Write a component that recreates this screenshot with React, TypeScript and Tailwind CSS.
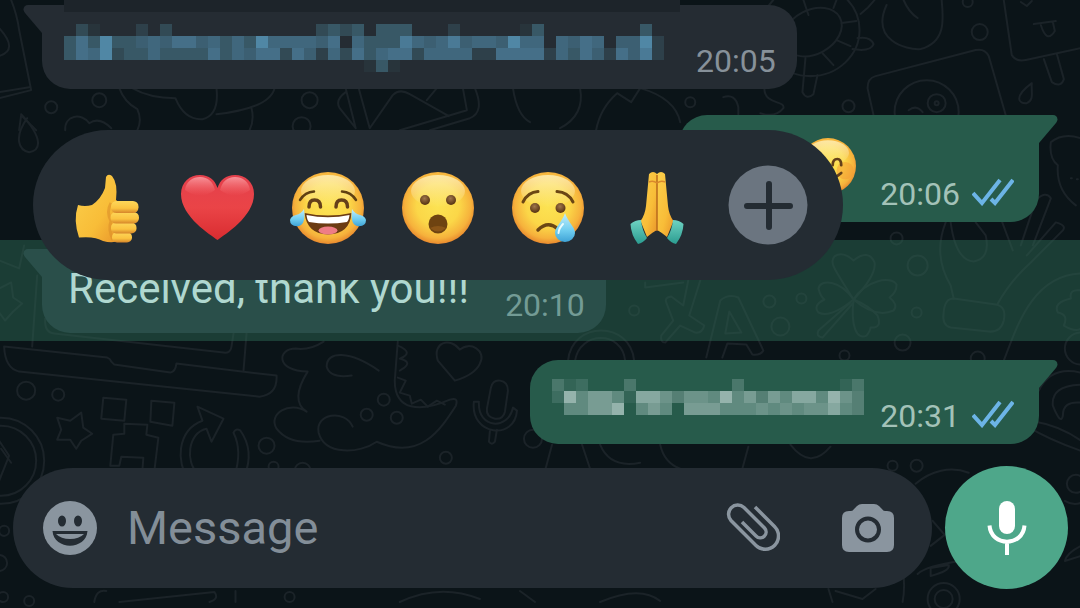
import type { ReactNode } from "react";

const EMAIL_ROWS = [
  ".31...2.3............3434.444...2.....14........4.",
  "47494456577564649666657064448656856659660657605592",
  "47693446444474657737526374677366662277772647527582",
  ".........................141......................",
];

const REPLY_ROWS = [
  "312...3........3........13",
  "29577518864665957475885964",
  ".55779.575.777555656566854",
];

const DOODLES = [
  // laptop
  "M5 346L108 357Q111 358 112 361L115 364L171 372Q176 371 177 363L277 375Q278 394 260 396L20 371Q6 368 5 346Z",
  "M33 346L38 275M46 318Q45 332 55 333L224 352Q231 353 232 346L234 333M244 370L247 333",
  // star and blocks
  "M82 412L84 427L93 433L82 440L77 448L71 439L58 439L62 429L58 417L71 420Z",
  "M104 397L127 399L125 420L102 418ZM152 400L175 402L173 425L151 421Z",
  "M155 470L159 437L147 434L148 424L125 423L125 433L114 434L111 465L120 465L122 456L144 457L143 470",
  // circular arrow
  "M203 420L198 406L224 418L212 441L207 428C188 432 186 462 198 472M203 420C176 430 178 465 188 475",
  "M234 432Q236 427 241 430Q255 450 245 475M234 432Q243 450 235 475",
  // cloud and crescent
  "M324 341Q310 350 296 348C278 348 275 370 308 371Q290 400 307 411C290 400 268 413 277 428Q290 445 320 440",
  "M353 426C345 408 315 413 319 432C325 455 360 453 377 441C420 460 440 430 456 405Q459 396 450 399C420 412 395 410 395 380L398 341",
  "M398 345Q415 352 400 358Q415 362 400 370M398 377L406 380L400 392L410 395L412 403L421 399L428 406L437 400L445 404",
  "M379 370C350 350 327 350 327 366Q330 378 352 375",
  "M455 380L438 360C432 342 450 336 460 349C470 340 487 350 480 363Q475 374 455 380Z",
  // microphone
  "M491 387Q493 379 500 380Q508 381 508 390L505 411Q503 419 495 418Q486 416 487 408Z",
  "M474 401C470 435 515 440 517 410M479 402C478 428 508 430 513 407M490 430L489 441Q492 445 495 441L497 429M474 401H479M513 407L517 410",
  // top left sheet
  "M12 0Q18 15 20 30L32 90L0 98M0 92L30 87M0 28Q20 50 0 56",
  "M20 130L22 115L37 130M66 130C65 115 82 112 90 123Q100 116 112 128M120 88Q125 102 138 109Q143 120 138 130",
  "M28 118C14 138 20 150 30 152C42 150 44 138 22 114M133 88Q150 98 176 98Q185 120 203 119Q220 115 217 88M217 114Q270 108 275 88M252 108Q255 120 250 130",
  // picture
  "M346 88L356 128M359 88L370 128L393 95Q400 88 410 94L449 116M427 100L437 88M463 88L467 110L400 130M475 88Q485 112 470 118L430 130M513 88Q517 115 530 122M346 92Q335 100 340 108L356 128",
  "M580 88Q585 115 560 128M596 130Q600 108 617 93L631 102L640 88Q675 98 680 122",
  "M723 97Q735 93 738 107L738 114M764 88C764 105 785 100 783 108Q775 118 760 113",
  // turtle
  "M841 23L856 21M836 40L850 46M822 53L833 65M833 8L836 0M808 15L803 0",
  "M857 38Q870 36 873 44Q870 52 852 49M805 58L802 92Q806 100 813 94L817 75M860 14Q868 8 874 0",
  "M886 5C870 40 905 50 920 49C945 42 943 20 941 0M903 0Q908 12 917 18",
  // ice lolly
  "M1003 0L1011 55Q1015 62 1025 60L1080 48M1043 59L1051 82Q1060 88 1063 79L1056 54M1033 24L1055 21M1040 25Q1046 44 1054 31L1052 22M1020 2L1026 6L1031 1",
  // camera
  "M873 115L867 88Q867 78 875 76L975 50Q984 48 988 56L1005 115M908 110Q916 104 922 112",
  "M1031 83C1012 97 1018 104 1026 103C1034 100 1030 90 1031 83Z",
  // bear and hand
  "M1080 138Q1062 132 1050 142Q1048 158 1057 165Q1055 190 1075 205M1070 178h1M1076 179h1",
  "M945 222Q932 255 950 285L953 298M950 222Q955 260 973 261Q990 258 985 235L975 222M1000 218L1012 250M1020 245L1035 200Q1045 190 1050 198L1032 245",
  "M1026 255L1055 222Q1066 225 1062 230L1030 262Q1010 280 997 303",
  "M953 298L995 304Q1006 306 1003 320Q1000 332 988 331L950 327Q941 325 943 312Q944 298 953 298Z",
  // clover
  "M853 299C835 270 828 262 834 256Q842 250 853 260Q868 248 874 262Q876 275 853 299Z",
  "M853 299C840 280 820 278 818 288Q820 296 824 299Q812 305 818 312Q830 318 853 299C865 280 890 275 896 284Q896 292 889 297Q898 304 893 310Q875 318 853 299",
  "M853 299C850 325 856 340 866 335Q870 330 870 327Q882 328 877 315Q868 305 853 299ZM850 302L818 330Q815 336 822 337L853 302",
  // letters
  "M688 280L683 305L671 296Q664 297 666 302L673 320L661 335Q660 342 665 342L680 325L695 332Q702 333 704 325L689 315L700 280M645 282V287L683 282",
  "M706 357L720 300Q728 293 738 297L763 350Q760 355 752 354L746 344L727 343L722 357M729 311L741 332L725 333Z",
  "M568 360C572 320 630 320 634 360M575 360C580 330 622 330 625 360",
  // cap
  "M1003 360C1015 330 1030 275 1080 273M1080 290Q1068 288 1070 298Q1052 302 1057 312Q1068 314 1063 325Q1075 332 1080 328",
  "M1080 372Q1050 365 1038 390M1080 384Q1050 385 1052 405Q1060 425 1062 415Q1062 400 1080 402M1025 425Q1050 440 1080 450M1030 420Q1060 425 1080 440",
  "M12 282L14 297L23 303L14 311L6 320L0 312M0 288L12 282M0 260L20 268L25 245",
  "M545 470L552 444M582 444L590 468M600 444Q610 468 640 462M660 444Q664 462 680 468M742 468L748 446M790 444Q810 470 830 446",
  // below the composer
  "M95 601Q97 588 107 590M120 601L215 591Q220 598 210 601M236 590V601M400 601Q440 582 480 598M520 590L535 601M600 601Q640 584 660 600",
  "M828 588L832 601M835 590L862 598L875 588M915 483C930 470 950 465 968 472M932 520L944 534L930 545M917 573Q925 565 960 560M930 567L948 564Q950 570 930 575ZM902 567Q905 585 902 601",
  "M1080 545Q1066 552 1064 560L1080 555M1064 500Q1072 505 1080 502M0 440L10 455L0 480M2 448L12 462",
];

// x, y, radius
const RINGS = [
  [27, 390, 9], [59, 394, 6], [384, 399, 6], [367, 414, 6], [397, 417, 6], [267, 445, 8], [274, 466, 5],
  [303, 470, 8], [446, 457, 6], [533, 438, 9], [2, 460, 43], [2, 460, 35], [52, 107, 6], [100, 100, 7],
  [310, 100, 8], [302, 126, 9], [967, 2, 5], [979, 32, 8], [690, 102, 5], [848, 106, 6], [926, 112, 32],
  [936, 103, 9], [936, 103, 2], [896, 238, 6], [917, 265, 10], [769, 301, 6], [801, 298, 5], [780, 326, 9],
  [634, 310, 5], [916, 312, 5], [902, 342, 8], [844, 355, 5], [977, 358, 7], [1080, 348, 16], [5, 530, 5],
  [0, 562, 8], [4, 596, 5], [30, 600, 5], [290, 596, 5], [892, 465, 5], [916, 465, 6], [943, 598, 9],
  [943, 598, 16], [1075, 483, 9],
];

function Wallpaper() {
  return (
    <svg
      className="absolute inset-0 h-full w-full"
      viewBox="0 0 1080 608"
      preserveAspectRatio="xMidYMid slice"
      fill="none"
      stroke="#1b2328"
      strokeWidth="2"
      strokeLinejoin="round"
      strokeLinecap="round"
      aria-hidden="true"
    >
      {DOODLES.map((d, i) => (
        <path key={i} d={d} />
      ))}
      {RINGS.map(([x, y, r], i) => (
        <circle key={i} cx={x} cy={y} r={r} />
      ))}
      <ellipse cx="812" cy="32" rx="31" ry="22" transform="rotate(-28 812 32)" />
      <ellipse cx="810" cy="30" rx="49" ry="46" />
    </svg>
  );
}

const BLUE_SHADES = ["#242c33", "#28343b", "#2e404a", "#324a55", "#385866", "#3c5f72", "#40677d", "#456f88", "#4a7a96", "#5087a5"];
const GREEN_SHADES = ["#275b4b", "#336456", "#3d6d60", "#4a776b", "#557f74", "#608a7f", "#6c9389", "#789c93", "#86a8a0", "#95b3ac"];

function Mosaic({ rows, shades }: { rows: string[]; shades: string[] }) {
  const w = rows[0].length * 12;
  const h = rows.length * 12;
  return (
    <svg width={w} height={h} viewBox={`0 0 ${w} ${h}`} shapeRendering="crispEdges" className="block shrink-0" aria-hidden="true">
      {rows.map((row, y) =>
        row.split("").map((c, x) =>
          c === "." || c === "0" ? null : (
            <rect key={`${x}-${y}`} x={x * 12} y={y * 12} width="12" height="12" fill={shades[Number(c)]} />
          )
        )
      )}
    </svg>
  );
}

function Tail({ side }: { side: "left" | "right" }) {
  return (
    <svg
      width="20"
      height="28"
      viewBox="0 0 20 28"
      fill="currentColor"
      className={side === "left" ? "absolute right-full top-0 -scale-x-100" : "absolute left-full top-0"}
      aria-hidden="true"
    >
      <path d="M-1 0H14C18 0 20 4 17 8L0 28H-1Z" />
    </svg>
  );
}

function Incoming({ time, tone, timeTone, children }: { time: string; tone: string; timeTone: string; children: ReactNode }) {
  return (
    <div className={`relative ml-[42px] flex w-fit items-end gap-8 rounded-[28px] rounded-tl-none pb-3 pl-[22px] pr-[21px] pt-4 ${tone}`}>
      <Tail side="left" />
      {children}
      <time className={`relative text-[32px] leading-8 ${timeTone}`}>{time}</time>
    </div>
  );
}

function Outgoing({ time, size, children }: { time: string; size?: string; children: ReactNode }) {
  return (
    <div
      className={`relative ml-auto mr-[41px] flex w-fit items-end justify-end rounded-[28px] rounded-tr-none bg-[#275b4b] pb-3 pl-[22px] pr-[25px] text-[#275b4b] ${size ?? ""}`}
    >
      <Tail side="right" />
      {children}
      <time className="ml-4 text-[32px] leading-8 text-[#a3c2b8]">{time}</time>
      <svg width="42" height="28" viewBox="0 0 42 28" fill="none" stroke="#6cb4e6" strokeWidth="4" className="mb-1 ml-3" role="img" aria-label="Read">
        <path d="M1 15L10 25L28 2M19 21L23 25L41 2" />
      </svg>
    </div>
  );
}

function EmojiDefs() {
  return (
    <svg width="0" height="0" className="absolute" aria-hidden="true">
      <defs>
        <radialGradient id="face" cx="50%" cy="46%" r="54%">
          <stop offset="0" stopColor="#fce353" />
          <stop offset=".55" stopColor="#fbd748" />
          <stop offset=".85" stopColor="#f6b23c" />
          <stop offset="1" stopColor="#e8892e" />
        </radialGradient>
        <linearGradient id="shine" x1="0" y1="0" x2="0" y2="1">
          <stop offset="0" stopColor="#fff6c8" stopOpacity=".75" />
          <stop offset="1" stopColor="#fff6c8" stopOpacity="0" />
        </linearGradient>
        <linearGradient id="skin" x1="0" y1="0" x2="1" y2="1">
          <stop offset="0" stopColor="#fcd04c" />
          <stop offset=".6" stopColor="#f8bd38" />
          <stop offset="1" stopColor="#e8932a" />
        </linearGradient>
        <linearGradient id="finger" x1="0" y1="0" x2="0" y2="1">
          <stop offset="0" stopColor="#fdd75a" />
          <stop offset=".6" stopColor="#fbc340" />
          <stop offset="1" stopColor="#d5852a" />
        </linearGradient>
        <linearGradient id="heart" x1="0" y1="0" x2="0" y2="1">
          <stop offset="0" stopColor="#e4404c" />
          <stop offset=".5" stopColor="#ea4447" />
          <stop offset="1" stopColor="#d92c30" />
        </linearGradient>
        <linearGradient id="gloss" x1="0" y1="0" x2="0" y2="1">
          <stop offset="0" stopColor="#ffb5ba" stopOpacity=".7" />
          <stop offset="1" stopColor="#ff8080" stopOpacity="0" />
        </linearGradient>
        <linearGradient id="tear" x1="0" y1="0" x2="0" y2="1">
          <stop offset="0" stopColor="#c5eefb" />
          <stop offset=".6" stopColor="#6fcdf0" />
          <stop offset="1" stopColor="#3fa3d6" />
        </linearGradient>
        <linearGradient id="cuff" x1="0" y1="0" x2="0" y2="1">
          <stop offset="0" stopColor="#6fd3c3" />
          <stop offset="1" stopColor="#2b9c90" />
        </linearGradient>
        <radialGradient id="eye" cx="45%" cy="35%" r="60%">
          <stop offset="0" stopColor="#a0764c" />
          <stop offset="1" stopColor="#5a3614" />
        </radialGradient>
      </defs>
    </svg>
  );
}

function Face() {
  return (
    <>
      <circle cx="36" cy="36" r="36" fill="url(#face)" />
      <ellipse cx="36" cy="19" rx="27" ry="16" fill="url(#shine)" />
    </>
  );
}

function ThumbsUp() {
  return (
    <g transform="translate(3 2)">
      <path d="M3 31Q10 33 17 31Q26 25 30 14L31 3Q33 -1 37 2Q43 9 41 26L46 30V66Q38 70 28 67Q20 62 4 63.500Q-2 46 3 31Z" fill="url(#skin)" />
      <path d="M36 29Q31 38 36 47Q33 55 38 66" fill="none" stroke="#dc8f2a" strokeWidth="3" opacity=".6" />
      <rect x="37" y="58" width="20" height="10.500" rx="5" fill="url(#finger)" />
      <rect x="36" y="48.500" width="25.500" height="11" rx="5" fill="url(#finger)" />
      <rect x="35.500" y="38" width="28.500" height="11.500" rx="5.500" fill="url(#finger)" />
      <rect x="36" y="27" width="27.500" height="12" rx="5.500" fill="url(#finger)" />
    </g>
  );
}

function RedHeart() {
  return (
    <g transform="translate(-1 3)">
      <path d="M36.500 65C30 60 0 42 0 19C0 7 9 0 19 0C28 0 34 5 36.500 13C39 5 45 0 54 0C64 0 73 7 73 19C73 42 43 60 36.500 65Z" fill="url(#heart)" />
      <path d="M4 15C5 6 12 2 19 2C27 2 32 7 34 15Q19 26 4 15ZM39 15C41 7 46 2 54 2C61 2 68 6 69 15Q54 26 39 15Z" fill="url(#gloss)" />
    </g>
  );
}

function JoyFace() {
  return (
    <>
      <Face />
      <path d="M8 28Q13 20 22 19.500M50 19.500Q59 20 64 28" fill="none" stroke="#5f4012" strokeWidth="2.500" strokeLinecap="round" />
      <path d="M17 35Q17 28 22.500 28Q28.500 28 28.500 35M44 35Q44 28 49.500 28Q55.500 28 55.500 35" fill="none" stroke="#64401a" strokeWidth="3.500" strokeLinecap="round" />
      <path d="M12.500 41Q36 46 59.500 41Q58 62 36 62.500Q15 62 12.500 41Z" fill="#6b3b12" />
      <path d="M14.500 43Q36 47.500 57.500 43Q57 48 55 50Q36 53 17 50Q15 48 14.500 43Z" fill="#fff" />
      <ellipse cx="36" cy="58.500" rx="9.500" ry="4" fill="#ee7d86" />
      <path d="M12 37Q14 52 7 54Q-2 55 -2 48Q-1 44 4 43Q9 42 12 37ZM60 37Q58 52 65 54Q74 55 74 48Q73 44 68 43Q63 42 60 37Z" fill="url(#tear)" />
    </>
  );
}

function WowFace() {
  return (
    <>
      <Face />
      <circle cx="23" cy="28" r="5" fill="url(#eye)" />
      <circle cx="49" cy="28" r="5" fill="url(#eye)" />
      <circle cx="36" cy="52" r="9.500" fill="#6e4311" />
      <path d="M28 56Q36 63 44 56Q36 52 28 56Z" fill="#8a5518" />
    </>
  );
}

function CryFace() {
  return (
    <>
      <Face />
      <path d="M11 30Q16 20 26 19.500M45 19.500Q56 20 61 30" fill="none" stroke="#6b4614" strokeWidth="3" strokeLinecap="round" />
      <circle cx="23" cy="36" r="5" fill="url(#eye)" />
      <circle cx="48.500" cy="36" r="5" fill="url(#eye)" />
      <path d="M26 58Q36 48 46 57" fill="none" stroke="#6b4614" strokeWidth="3.500" strokeLinecap="round" />
      <path d="M53 41C56 50 63 55 63 61A10 9 0 0 1 43 61C43 55 50 50 53 41Z" fill="url(#tear)" />
      <path d="M46.500 61Q47 56 51 52" fill="none" stroke="#e8fbff" strokeWidth="2" strokeLinecap="round" />
    </>
  );
}

function PrayingHands() {
  return (
    <g transform="translate(8 0)">
      <path d="M19 2Q23 -2 27 2V58Q23 60 17 65L10.500 49Q15 43 16 34Z" fill="url(#skin)" />
      <path d="M35 2Q31 -2 27 2V58Q31 60 37 65L43.500 49Q39 43 38 34Z" fill="url(#skin)" />
      <path d="M27 3V59" stroke="#b96a1c" strokeWidth="1.500" />
      <path d="M19 10Q23 8 27 11Q31 8 35 10" fill="none" stroke="#d9882c" strokeWidth="1.500" />
      <path d="M0.500 52Q5 48 11 48Q12 58 17 66Q13 71 8 72Q1 63 0.500 52Z" fill="url(#cuff)" />
      <path d="M53.500 52Q49 48 43 48Q42 58 37 66Q41 71 46 72Q53 63 53.500 52Z" fill="url(#cuff)" />
    </g>
  );
}

const REACTIONS = [
  { label: "Thumbs up", Art: ThumbsUp },
  { label: "Red heart", Art: RedHeart },
  { label: "Tears of joy", Art: JoyFace },
  { label: "Surprised", Art: WowFace },
  { label: "Crying", Art: CryFace },
  { label: "Folded hands", Art: PrayingHands },
];

function ReactionBar() {
  return (
    <div className="absolute -top-[110px] left-[33px] z-10 flex h-[150px] items-center rounded-full bg-[#242c33] px-5">
      {REACTIONS.map(({ label, Art }) => (
        <button key={label} type="button" aria-label={label} className="flex w-[110px] justify-center pt-[6px]">
          <svg width="76" height="72" viewBox="-2 0 76 72" className="overflow-visible">
            <Art />
          </svg>
        </button>
      ))}
      <button type="button" aria-label="More reactions" className="flex w-[110px] justify-center">
        <svg width="80" height="80" viewBox="0 0 80 80">
          <circle cx="40" cy="40" r="39.500" fill="#6b7580" />
          <path d="M41 19V62M19 41H62" stroke="#242c33" strokeWidth="6" strokeLinecap="round" />
        </svg>
      </button>
    </div>
  );
}

function Composer() {
  return (
    <form className="mt-[22px] flex items-center gap-[13px] pb-5 pl-[13px] pr-3" onSubmit={(e) => e.preventDefault()}>
      <div className="flex h-[120px] min-w-0 flex-1 items-center rounded-full bg-[#242c33] pl-[30px] pr-[38px] text-[#8a959f]">
        <button type="button" aria-label="Emoji">
          <svg width="54" height="54" viewBox="-27 -27 54 54">
            <circle r="27" fill="currentColor" />
            <ellipse cx="-8" cy="-7" rx="4" ry="5.500" fill="#242c33" />
            <ellipse cx="8" cy="-7" rx="4" ry="5.500" fill="#242c33" />
            <path d="M-17.500 3H17.500C16 22.500 -16 22.500 -17.500 3Z" fill="#242c33" />
            <path d="M-14 6H14Q9 11 0 11Q-9 11 -14 6Z" fill="currentColor" />
          </svg>
        </button>
        <input
          type="text"
          aria-label="Message"
          placeholder="Message"
          className="ml-[30px] min-w-0 flex-1 bg-transparent text-[47px] leading-[56px] outline-none placeholder:text-[#838e98]"
        />
        <button type="button" aria-label="Attach">
          <svg width="54" height="49" viewBox="0 0 54 49" fill="none" stroke="currentColor" strokeWidth="3.500">
            <path d="M29 4L48.500 23.500A13 13 0 0 1 30 42.500L5 17.500A9.200 9.200 0 0 1 18 4.500L38.500 25A5.800 5.800 0 0 1 30 33L16 19" />
          </svg>
        </button>
        <button type="button" aria-label="Camera" className="ml-[62px]">
          <svg width="52" height="48" viewBox="0 0 52 48">
            <path d="M7 7H9Q11 7 12 5L15 2Q17 0 20 0H32Q35 0 37 2L40 5Q41 7 43 7H45Q52 7 52 14V41Q52 48 45 48H7Q0 48 0 41V14Q0 7 7 7Z" fill="currentColor" />
            <circle cx="26" cy="25.500" r="11" fill="none" stroke="#242c33" strokeWidth="4" />
          </svg>
        </button>
      </div>
      <button type="button" aria-label="Record voice message" className="flex size-[123px] shrink-0 items-center justify-center rounded-full bg-[#4ea78a]">
        <svg width="40" height="54" viewBox="0 0 40 54" fill="none" stroke="#fff" strokeWidth="4">
          <rect x="12" y="0" width="16" height="33" rx="8" fill="#fff" stroke="none" />
          <path d="M2.500 24.500C4 46 36 46 37.500 24.500M20 40V54" />
        </svg>
      </button>
    </form>
  );
}

export default function App() {
  return (
    <div className="relative min-h-screen overflow-hidden bg-[#0b1418] font-['Roboto',sans-serif]">
      <Wallpaper />
      <EmojiDefs />
      <main className="relative flex flex-col pt-[5px]">
        <Incoming time="20:05" tone="bg-[#252c33] text-[#252c33]" timeTone="text-[#87919a]">
          <div className="absolute -top-[5px] left-[22px] h-3 w-[616px] bg-[#1d242a]" />
          <div className="pb-[5px] pt-[3px]">
            <Mosaic rows={EMAIL_ROWS} shades={BLUE_SHADES} />
          </div>
        </Incoming>

        <div className="mt-[26px]">
          <Outgoing time="20:06" size="h-[107px] min-w-[360px]">
            <svg width="56" height="56" viewBox="0 0 72 72" className="mb-4 mr-2" role="img" aria-label="Smiling face">
              <Face />
              <circle cx="58" cy="42" r="11" fill="#f39a34" opacity=".5" />
              <circle cx="14" cy="42" r="11" fill="#f39a34" opacity=".5" />
              <path d="M19 35Q19 27 24 27Q30 27 30 35M42 35Q42 27 48 27Q53 27 53 35M20 46Q36 60 53 45" fill="none" stroke="#64401a" strokeWidth="3.500" strokeLinecap="round" />
            </svg>
          </Outgoing>
        </div>

        <div className="relative mt-[18px] bg-[#2b6652]/50 pb-2 pt-[9px]">
          <Incoming time="20:10" tone="bg-[#2a4f4a] text-[#2a4f4a]" timeTone="text-[#739b95]">
            <p className="relative mb-2 px-1 text-[42px] leading-[48px] text-[#b0d8d0]">Received, thank you!!!</p>
          </Incoming>
          <ReactionBar />
        </div>

        <div className="mt-[19px]">
          <Outgoing time="20:31" size="h-[84px]">
            <div className="mb-[17px]">
              <Mosaic rows={REPLY_ROWS} shades={GREEN_SHADES} />
            </div>
          </Outgoing>
        </div>

        <Composer />
      </main>
    </div>
  );
}
